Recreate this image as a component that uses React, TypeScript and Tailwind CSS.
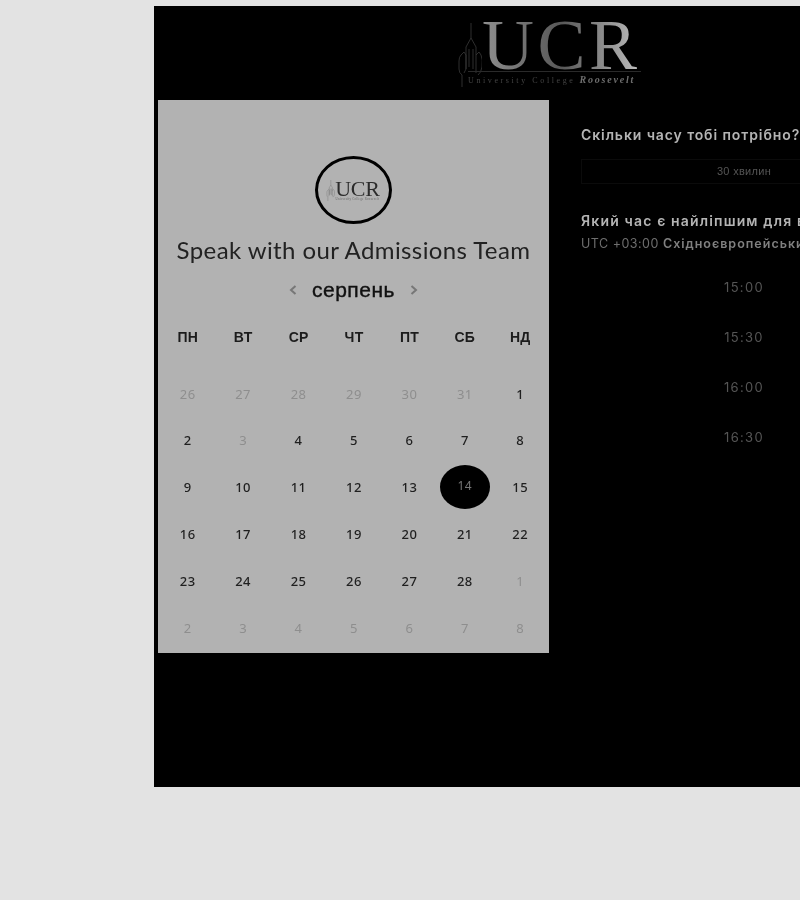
const weekdays = ['пн', 'вт', 'ср', 'чт', 'пт', 'сб', 'нд']

// muted = days that can't be picked
const days = [
    { d: 26, muted: true }, { d: 27, muted: true }, { d: 28, muted: true }, { d: 29, muted: true }, { d: 30, muted: true }, { d: 31, muted: true }, { d: 1 },
    { d: 2 }, { d: 3, muted: true }, { d: 4 }, { d: 5 }, { d: 6 }, { d: 7 }, { d: 8 },
    { d: 9 }, { d: 10 }, { d: 11 }, { d: 12 }, { d: 13 }, { d: 14, selected: true }, { d: 15 },
    { d: 16 }, { d: 17 }, { d: 18 }, { d: 19 }, { d: 20 }, { d: 21 }, { d: 22 },
    { d: 23 }, { d: 24 }, { d: 25 }, { d: 26 }, { d: 27 }, { d: 28 }, { d: 1, muted: true },
    { d: 2, muted: true }, { d: 3, muted: true }, { d: 4, muted: true }, { d: 5, muted: true }, { d: 6, muted: true }, { d: 7, muted: true }, { d: 8, muted: true },
]

const times = ['15:00', '15:30', '16:00', '16:30']

function Tower({ className, stroke }: { className: string, stroke: string }) {
    return (
        <svg viewBox="0 0 24 64" fill="none" stroke={stroke} strokeWidth="0.8" className={className}>
            <path d="M13 0V15M13 15L8 24V46M13 15L18 24V50" />
            <path d="M3 32Q1 34 1 38V46Q1 50 4 52M3 32L6 29L8 32V46L6 50" />
            <path d="M23 32Q25 36 24 44Q23 50 20 52M18 32L21 29L23 32" />
            <path d="M11 26V44M15 26V46M4 52V64" />
        </svg>
    )
}

function Arrow({ points }: { points: string }) {
    return (
        <svg viewBox="0 0 8 10" fill="none" stroke="#777" strokeWidth="2" className="w-[8px] h-[10px]">
            <polyline points={points} />
        </svg>
    )
}

export default function App() {
    return (
        <div className="h-[900px] overflow-hidden bg-[#e3e3e3] pt-[6px] pl-[154px] blur-[0.5px]">
            <div className="w-[790px] h-[781px] bg-black">

                <div className="h-[94px] flex justify-center items-start pt-[14px]">
                    <div className="flex items-start w-[182px]">
                        <Tower className="w-[24px] h-[64px] mt-[3px] shrink-0" stroke="#3a3a3a" />
                        <div className="flex flex-col">
                            <p className="h-[51px] text-[72px] leading-[51px] tracking-[3.5px] font-['Liberation_Serif',serif] bg-linear-to-r from-[#8f8f8f] via-[#585858] to-[#c0c0c0] bg-clip-text text-transparent">UCR</p>
                            <div className="border-t border-[#2a2a2a] -ml-[14px] pt-[2px] flex items-baseline whitespace-nowrap font-['Liberation_Serif',serif]">
                                <span className="text-[8px] leading-[12px] tracking-[2.6px] text-[#444]">University College</span>
                                <span className="text-[10px] leading-[12px] tracking-[1.8px] italic font-bold text-[#6e6e6e] ml-[4px]">Roosevelt</span>
                            </div>
                        </div>
                    </div>
                </div>

                <div className="flex items-start">
                    <div className="w-[391px] h-[553px] ml-1 bg-[#b2b2b2] flex flex-col items-center pt-[56px]">

                        <div className="w-[77px] h-[68px] rounded-[50%] border-[3px] border-black flex justify-center items-center">
                            <div className="flex items-start -ml-[1px]">
                                <Tower className="w-[9px] h-[21px] shrink-0" stroke="#555" />
                                <div className="flex flex-col items-center">
                                    <p className="h-[17px] text-[22px] leading-[17px] tracking-[-0.2px] font-['Liberation_Serif',serif] text-[#2b2b2b]">UCR</p>
                                    <p className="text-[3px] leading-[4px] tracking-[0.3px] whitespace-nowrap text-[#666] font-['Liberation_Serif',serif]">University College Roosevelt</p>
                                </div>
                            </div>
                        </div>

                        <h1 className="mt-[10px] text-[24px] leading-[32px] text-[#222] font-['Lato',sans-serif] tracking-[0.4px] whitespace-nowrap">Speak with our Admissions Team</h1>

                        <div className="mt-[11px] h-[26px] flex items-center gap-[15px]">
                            <Arrow points="6.5,1 2,5 6.5,9" />
                            <span className="text-[21px] leading-[26px] tracking-[0.5px] text-[#111] [-webkit-text-stroke:0.4px_#111] font-['Liberation_Sans',sans-serif]">серпень</span>
                            <Arrow points="1.5,1 6,5 1.5,9" />
                        </div>

                        <div className="w-full grid grid-cols-7 mt-[24px] pl-[2px] pr-[1px]">
                            {weekdays.map((w) => (
                                <div key={w} className="h-[20px] flex justify-center items-center uppercase text-[14px] font-bold tracking-[0.2px] text-[#1c1c1c] font-['Liberation_Sans',sans-serif]">{w}</div>
                            ))}
                        </div>

                        <div className="w-full grid grid-cols-7 grid-rows-[repeat(6,46.8px)] mt-[24px] pl-[2px] pr-[1px]">
                            {days.map((day, i) => (
                                <div key={i} className="flex justify-center items-center text-[13px] tracking-[0.5px] font-['Noto_Sans',sans-serif]">
                                    {day.selected ? (
                                        <span className="w-[50px] h-[44px] rounded-[50%] bg-black text-[#777] text-[12px] flex justify-center items-center pb-[2px] -mt-[2px]">{day.d}</span>
                                    ) : (
                                        <span className={day.muted ? "text-[#8e8e8e]" : "text-[#1f1f1f] font-medium"}>{day.d}</span>
                                    )}
                                </div>
                            ))}
                        </div>
                    </div>

                    <div className="w-[326px] ml-[32px] pt-[26px] whitespace-nowrap font-['Inter',sans-serif]">
                        <p className="text-[14px] leading-[18px] font-semibold tracking-[0.9px] text-[#b4b4b4]">Скільки часу тобі потрібно?</p>
                        <div className="mt-[15px] h-[25px] border border-[#0b0b0b] flex justify-center items-center text-[11px] tracking-[0.3px] text-[#555] font-['Liberation_Sans',sans-serif]">30 хвилин</div>
                        <p className="mt-[28px] text-[14px] leading-[18px] font-semibold tracking-[1.15px] text-[#b4b4b4]">Який час є найліпшим для вас?</p>
                        <p className="mt-[6px] text-[12.5px] leading-[16px] tracking-[0.5px] text-[#6e6e6e]">UTC +03:00 <span className="font-semibold tracking-[1px] text-[#808080]">Східноєвропейський час</span></p>
                        <div className="mt-[11px] flex flex-col">
                            {times.map((t) => (
                                <div key={t} className="h-[50px] flex justify-center items-center text-[13px] tracking-[1.3px] text-[#555]">{t}</div>
                            ))}
                        </div>
                    </div>
                </div>

            </div>
        </div>
    )
}
